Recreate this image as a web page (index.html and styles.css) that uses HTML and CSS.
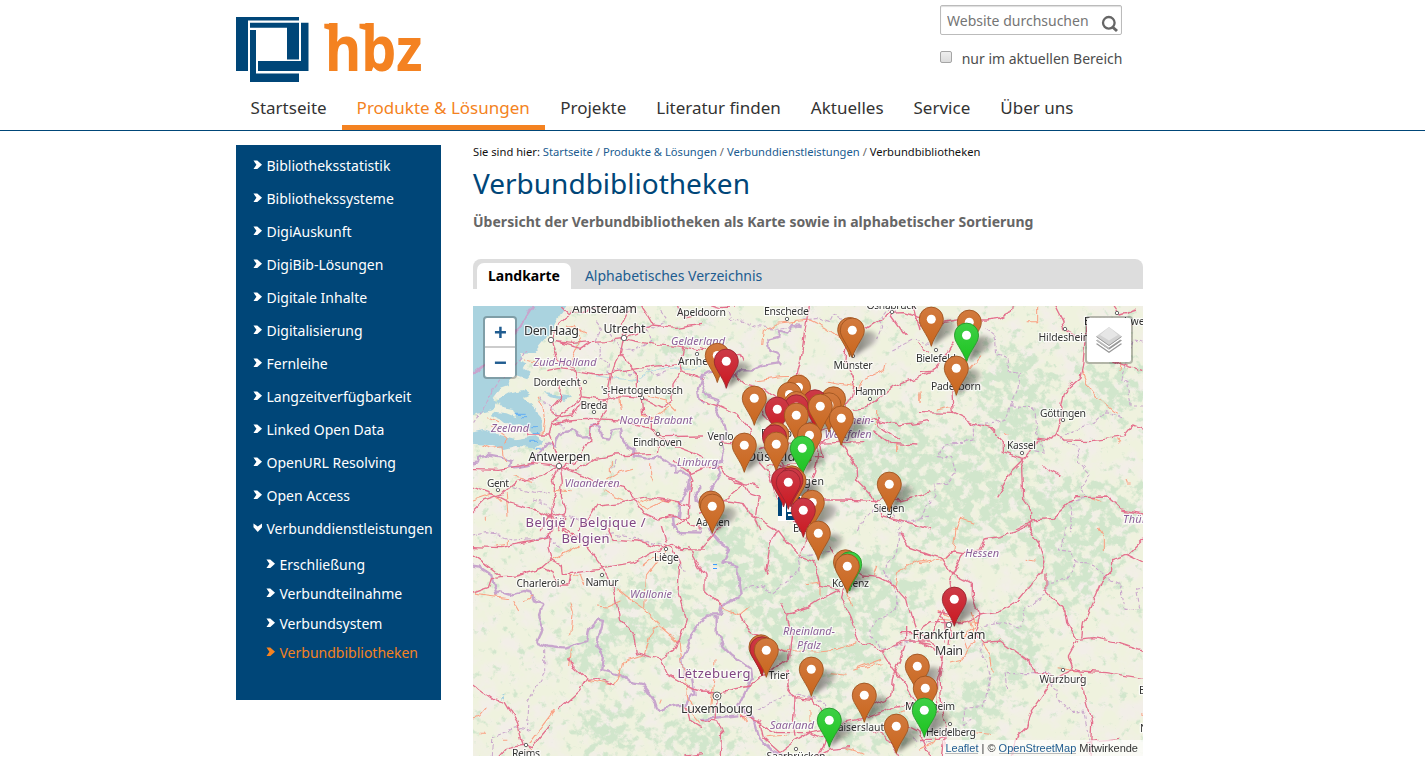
FILE: index.html
```html
<!DOCTYPE html>
<html lang="de">
<head>
<meta charset="utf-8">
<title>Verbundbibliotheken — hbz</title>
<link rel="stylesheet" href="styles.css">
</head>
<body>
<header class="header">
  <div class="wrap">
    <div class="header-top">
      <a class="logo" href="#" aria-label="hbz">
        <svg width="190" height="70" viewBox="236 15 190 70">
          <g fill="#004678"><path d="M236 17h63v3.500h-51V71h-12z"/><path d="M250 22.700h49v5h-49z"/><path d="M301 22.700h7.500V71H258v-10h43z"/><path d="M287 27h12v32.500h-12z"/><path d="M250 30h6v43.500h43V82h-49z"/></g>
          <g class="logo-text"><text transform="translate(325 71) scale(.9 1)">h</text><text transform="translate(361.200 71) scale(.9 1)">b</text><text transform="translate(396 71) scale(.87 .97)">z</text></g>
          <path fill="#f48221" d="M324.300 23.700h9v6h-4l-5-1.500zM359.500 23.700h9v6h-4l-5-1.500z"/>
        </svg>
      </a>
      <form class="search">
        <div class="search-box"><input type="text" placeholder="Website durchsuchen" aria-label="Suche">
          <svg width="18" height="18" viewBox="0 0 18 18" fill="none" stroke="#666"><circle cx="7.800" cy="7.800" r="5.800" stroke-width="2.300"/><path d="M11.500 12l4.500 4" stroke-width="3"/></svg>
        </div>
        <label class="search-scope"><input type="checkbox"><span>nur im aktuellen Bereich</span></label>
      </form>
    </div>
    <nav class="nav"><a href="#">Startseite</a><a class="active" href="#">Produkte &amp; Lösungen</a><a href="#">Projekte</a><a href="#">Literatur finden</a><a href="#">Aktuelles</a><a href="#">Service</a><a href="#">Über uns</a></nav>
  </div>
</header>
<svg class="defs" width="0" height="0"><symbol id="chev" viewBox="0 0 10 10"><path fill="currentColor" d="M.5.500H4.500L9.500 5 4.500 9.500H.5L3.600 5z"/></symbol></svg>
<div class="wrap page">
  <aside class="sidebar">
    <ul class="tree">
      <li><svg><use href="#chev"/></svg><a href="#">Bibliotheksstatistik</a></li>
      <li><svg><use href="#chev"/></svg><a href="#">Bibliothekssysteme</a></li>
      <li><svg><use href="#chev"/></svg><a href="#">DigiAuskunft</a></li>
      <li><svg><use href="#chev"/></svg><a href="#">DigiBib-Lösungen</a></li>
      <li><svg><use href="#chev"/></svg><a href="#">Digitale Inhalte</a></li>
      <li><svg><use href="#chev"/></svg><a href="#">Digitalisierung</a></li>
      <li><svg><use href="#chev"/></svg><a href="#">Fernleihe</a></li>
      <li><svg><use href="#chev"/></svg><a href="#">Langzeitverfügbarkeit</a></li>
      <li><svg><use href="#chev"/></svg><a href="#">Linked Open Data</a></li>
      <li><svg><use href="#chev"/></svg><a href="#">OpenURL Resolving</a></li>
      <li><svg><use href="#chev"/></svg><a href="#">Open Access</a></li>
      <li><svg class="open"><use href="#chev"/></svg><a href="#">Verbunddienstleistungen</a></li>
    </ul>
    <ul class="tree subtree">
      <li><svg><use href="#chev"/></svg><a href="#">Erschließung</a></li>
      <li><svg><use href="#chev"/></svg><a href="#">Verbundteilnahme</a></li>
      <li><svg><use href="#chev"/></svg><a href="#">Verbundsystem</a></li>
      <li class="current"><svg><use href="#chev"/></svg><a href="#">Verbundbibliotheken</a></li>
    </ul>
  </aside>
  <main class="content">
    <div class="crumbs">Sie sind hier: <a href="#">Startseite</a> <i>/</i> <a href="#">Produkte &amp; Lösungen</a> <i>/</i> <a href="#">Verbunddienstleistungen</a> <i>/</i> Verbundbibliotheken</div>
    <h1>Verbundbibliotheken</h1>
    <p class="lead">Übersicht der Verbundbibliotheken als Karte sowie in alphabetischer Sortierung</p>
    <div class="tabs"><a class="tab selected" href="#">Landkarte</a><a class="tab" href="#">Alphabetisches Verzeichnis</a></div>
    <div class="map">
      <svg class="map-canvas" width="670" height="450" viewBox="473 306 670 450">
        <defs>
          <filter id="woods" x="0" y="0" width="1" height="1" color-interpolation-filters="sRGB">
            <feGaussianBlur in="SourceAlpha" stdDeviation="13" result="area"/>
            <feTurbulence type="fractalNoise" baseFrequency=".11" numOctaves="5" seed="7"/>
            <feColorMatrix values="0 0 0 0 0 0 0 0 0 0 0 0 0 0 0 1 0 0 0 0" result="noise"/>
            <feComposite in="noise" in2="area" operator="arithmetic" k2="1" k3=".26"/>
            <feColorMatrix values="0 0 0 0 .82 0 0 0 0 .9 0 0 0 0 .8 0 0 0 6 -3.750"/>
          </filter>
          <filter id="fields" x="0" y="0" width="1" height="1" color-interpolation-filters="sRGB">
            <feTurbulence type="fractalNoise" baseFrequency=".05" numOctaves="5" seed="21"/>
            <feColorMatrix values="0 0 0 0 .95 0 0 0 0 .935 0 0 0 0 .91 3 0 0 0 -1.200"/>
          </filter>
          <filter id="winding" filterUnits="userSpaceOnUse" x="473" y="306" width="670" height="450" color-interpolation-filters="sRGB">
            <feTurbulence type="fractalNoise" baseFrequency=".09" numOctaves="2" seed="4" result="n"/>
            <feDisplacementMap in="SourceGraphic" in2="n" scale="7" xChannelSelector="R" yChannelSelector="G"/>
          </filter>
          <filter id="soft" x="-.3" y="-.3" width="1.600" height="1.600"><feGaussianBlur stdDeviation="2.100"/></filter>
          <linearGradient id="fade" gradientUnits="userSpaceOnUse" x1="2" y1="0" x2="25" y2="0"><stop/><stop offset="1" stop-opacity=".35"/></linearGradient>
          <linearGradient id="go" x2="0" y2="1"><stop stop-color="#d27a3f"/><stop offset="1" stop-color="#c9661d"/></linearGradient>
          <linearGradient id="gr" x2="0" y2="1"><stop stop-color="#cc3b48"/><stop offset="1" stop-color="#cb1820"/></linearGradient>
          <linearGradient id="gg" x2="0" y2="1"><stop stop-color="#3ed046"/><stop offset="1" stop-color="#1cc31f"/></linearGradient>
          <path id="body" d="M0 27C-1.500 21-5 16-8.500 9.800-10.800 6-12 3.500-12-.2A12 12 0 0 1 12-.2C12 3.500 10.800 6 8.500 9.800 5 16 1.500 21 0 27z"/>
          <g id="o"><use href="#body" fill="url(#go)" stroke="#9f541f" stroke-width=".9"/><circle r="4.500" fill="#fff"/></g>
          <g id="r"><use href="#body" fill="url(#gr)" stroke="#992631" stroke-width=".9"/><circle r="4.500" fill="#fff"/></g>
          <g id="g"><use href="#body" fill="url(#gg)" stroke="#26972b" stroke-width=".9"/><circle r="4.500" fill="#fff"/></g>
          <path id="s" fill="url(#fade)" d="M1 27L6 8C10 1 17-1 23 3q5 5-3 12-8 4-19 12z"/>
        </defs>
        <rect class="land" x="473" y="306" width="670" height="450"/>
        <rect x="473" y="306" width="670" height="450" filter="url(#fields)"/>
        <g filter="url(#woods)">
          <rect x="473" y="306" width="670" height="450" fill="none"/>
          <ellipse cx="885" cy="455" rx="58" ry="52"/><ellipse cx="1110" cy="390" rx="38" ry="30"/><ellipse cx="1015" cy="400" rx="40" ry="60"/><ellipse cx="950" cy="490" rx="55" ry="60"/><ellipse cx="1030" cy="510" rx="50" ry="40"/><ellipse cx="730" cy="555" rx="28" ry="45"/><ellipse cx="790" cy="590" rx="60" ry="45"/><ellipse cx="870" cy="590" rx="60" ry="40"/><ellipse cx="590" cy="655" rx="30" ry="30"/><ellipse cx="650" cy="615" rx="50" ry="38"/><ellipse cx="870" cy="720" rx="48" ry="30"/><ellipse cx="820" cy="645" rx="70" ry="35"/><ellipse cx="1015" cy="645" rx="30" ry="45"/><ellipse cx="1075" cy="560" rx="45" ry="45"/><ellipse cx="975" cy="710" rx="30" ry="35"/><ellipse cx="610" cy="730" rx="35" ry="30"/><ellipse cx="1100" cy="510" rx="50" ry="30"/><ellipse cx="678" cy="350" rx="22" ry="20"/><ellipse cx="700" cy="740" rx="45" ry="25"/>
        </g>
        <g filter="url(#winding)">
        <!-- coast and estuaries -->
        <g transform="translate(473 300) scale(.33333)">
          <path class="water" d="M-20 0H290L262 42 240 82 210 122 182 156 145 160 140 182 160 190 152 205 170 215 160 235 130 225 105 240 108 258 80 268 62 290 72 305 60 330 20 340-20 350z"/>
          <path class="water" d="M70 300L110 278 150 270 172 285 150 295 178 320 205 350 208 402 178 402 165 385 135 372 110 380 85 360 50 345 62 335 100 340 130 352 120 330 90 325zM-20 402L30 390 80 405 130 418 190 408 215 425 188 442 130 438 95 447 50 436-20 430zM215 280L290 285 300 293 270 299 232 292z"/>
          <path fill="none" stroke="#3c9bff" stroke-width="2" d="M125 343h30M145 353h15M175 377h20M180 401h25M166 427h35M194 442h14"/>
          <path class="lake" d="M690 195Q650 215 620 205T540 215 500 240 430 235 370 228"/>
          <path class="border" d="M-20 230L0 218 30 195 65 165 105 115 145 75 190 5" stroke-width="4"/>
          <path class="dash" d="M0 370L35 320 60 270 110 205 165 150"/>
        </g>
        <!-- north-west -->
        <g transform="translate(473 300) scale(.33333)">
          <path class="border" d="M-20 492L15 487 20 468 40 465 80 472 112 480 108 500 128 502 162 496 182 490 192 465 222 432 248 440 250 420 260 400 300 390 326 410 350 408 355 378 380 380 384 412 408 416 418 392 442 386 444 412 462 440 485 448 482 470 545 478 556 468 588 490 608 500 606 515 632 515 652 530 648 565 622 600 618 650 600 655 605 690M690 225L675 265 680 300 690 310M690 560L665 575 668 600 690 615"/>
          <path class="dash" d="M370 65L385 85 370 120 385 150 378 180 410 190 405 215 450 210 470 225 520 212 550 225 580 215M520 80L555 85 580 55 560 30M200 290L215 310 240 318 250 360 275 385M410 100L440 145 490 150 530 125 520 90M180 600L220 610 235 635 275 650 330 665M120 560L180 580 230 575M430 480L415 515"/>
          <path class="minor" d="M300 75L325 115 310 150 290 190M195 290L210 320 215 360 210 405M150 180L190 185 205 205M285 75L340 100M25 435L55 445 90 440 95 485M60 380L100 410 92 430M440 285L445 330M400 540L440 515 480 505M530 490L530 530 540 555M530 595L500 610 520 625 570 600 610 610M100 580L105 650M125 530L185 545M240 570L290 575M590 320L530 360 510 345M610 330L580 300 520 285M415 483V520M0 600L60 580 85 605M40 350L75 365M40 650V665M400 575L450 600"/>
          <path class="road" d="M235 118L248 85 275 60 300 40 345 30 390 18M248 125L300 130 348 125 400 122 450 115 520 130 610 140 690 155M350 128L325 145 248 125M452 112L448 70 465 35 495 10M452 112L442 160 460 185 490 215 490 255 508 295 512 340 535 355 535 390 552 410 610 440 690 470M442 160L430 180 415 225 402 290 400 335 370 375 352 385 350 420 330 455 310 485 262 500M235 118L250 175 300 205 320 255 325 290 300 320 265 340 235 370 225 405 240 440 262 500M220 212L255 205 310 212 380 225 420 220 530 200 590 195 615 190M265 255L262 295 236 325 238 345 265 350M265 350L300 345 325 305M325 290L385 300 430 290 508 295M155 375L165 405 225 405M235 375L290 360 340 355 440 360 465 372 540 385 570 410 690 408M508 295L565 325 600 300 600 255 625 215 690 235M495 75L465 95 452 112M452 112L490 100 540 75 520 40 500 10M540 75L610 82 655 75 690 70M-20 505L80 508 180 490 262 500 370 545 455 560 480 590 515 640 560 660 590 650 620 655 690 690M-20 555L80 590 110 605 160 620 190 630 230 650 260 660M-20 655L35 600 90 580 130 545 200 530 262 500M262 500L238 540 248 580 238 620 235 655 262 690M262 500L268 540 265 590 278 625 272 690M262 500L310 510 370 475 425 465 550 460 555 430 575 440M315 690L350 650 372 615 445 608 520 590 580 600 645 615M645 510L660 540 650 580 645 650 610 675M600 480L655 520 690 505"/>
          <path class="road" d="M610 10L630 55 690 40M630 140L620 185 625 215M200 690L230 650 280 640M262 18L290 45"/>
        </g>
        <!-- north -->
        <g transform="translate(700 300) scale(.33333)">
          <path class="border" d="M305 75L278 72 262 98 240 90 238 112 202 122 208 150 240 162 235 190 185 198 155 212 125 210 100 230 65 215 25 220 0 235 12 265 25 290 55 300 45 325 70 370 78 400 65 425 72 455 65 485 45 490 65 520 38 560 22 585 0 590"/>
          <path class="dash" d="M85 35L92 58 142 70 170 80 240 85 300 75M305 60L360 55 390 65 400 45 430 60M530 120L545 80 535 60 560 30 600 40M580 150L640 120 690 130M475 690L495 650 550 620 600 670 690 650"/>
          <path class="minor" d="M185 135L190 95 230 70 330 60 380 85 430 120M165 240L240 230 310 228 325 245M380 250L480 265 490 240 550 212 555 190M660 280V305M530 330V375M590 430V450"/>
          <path class="road" d="M330 10L312 105 305 165 290 235 288 300 320 380M0 0L60 20 105 18M0 145L75 165 120 160 130 182M100 225L130 250 190 265 260 320M440 90L435 185 465 245 455 290 425 330 420 425 468 495 470 540 520 590 545 650 640 672 690 690M690 215L580 260 500 325 400 340 300 380M385 380L520 360 600 375 690 362M350 430L490 425M520 395L570 430 655 435M530 350L540 380 600 420M500 85L570 40 610 38 690 60M575 45L620 110M300 600L430 600 530 605 545 590 600 600 690 575M0 300L55 320 110 345 150 390 155 460 200 510 230 590M0 505L65 500 85 530 130 550 180 560M65 425L110 430 180 480M85 535L100 545 130 552 145 580 175 590 165 660 180 690M0 640L50 620 130 552M60 600L130 610 150 640 230 690M300 470L370 470 360 430 390 410M355 440L350 490 335 540 310 600M240 480L270 530 300 580"/>
          <path class="road" d="M150 300L200 350 240 390 330 400 395 380M180 450L240 430 340 440M200 500L300 490 350 440M230 590L260 640 310 690M650 130L690 160M660 90L640 10"/>
        </g>
        <!-- north-east -->
        <g transform="translate(920 300) scale(.33333)">
          <path class="dash" d="M200 85L225 105 230 160 265 175 265 215 298 220 290 270 270 320 260 355 225 370 160 375 160 420 80 435 55 470 95 475 108 520 80 550 45 552 45 590 0 655M270 318L340 320 350 400 375 460 340 450M690 315L630 315 620 250 605 240 620 190 640 120 690 130M600 350L560 335 520 375 480 380 420 415 470 440 480 490 510 520 480 560 500 590 450 610 455 690"/>
          <path class="minor" d="M485 210L500 250 530 290 590 340M350 18L350 65 320 65M180 170L130 230 90 255M640 75L605 95M620 85L600 210M50 330L95 320M255 400L268 408M105 690L120 655 160 670M615 540L620 552H632M510 590L550 608M590 420L600 430M0 285V305"/>
          <path class="road" d="M400 5L428 60 435 90 470 110 500 115M500 60L490 180 480 235 430 280 422 320 428 340 410 400 395 420 355 415 330 455 315 475 290 470 250 455 250 425 210 385 160 370 100 340 0 338M100 340L95 265 110 205M410 400L435 420 520 422 610 410 640 375 690 395M315 475L270 520 255 550 230 592M315 475L305 500 308 600 335 640 335 665 285 690M335 660L400 655 470 590 560 588 605 630 690 645M370 500L425 528M0 215L40 210 80 160 100 125M0 78L110 60 200 60 240 55 270 40 275 8M575 8L600 45 650 30M500 100L545 165 600 190 690 220M325 665V690"/>
        </g>
        <!-- south-west -->
        <g transform="translate(473 526) scale(.33333)">
          <path class="border" d="M-20 116L20 122 55 145 70 210 82 195 115 205 150 195 175 200 182 225 208 235 195 270 208 310 190 350 225 362 275 368 340 345 345 310 372 280 390 285 370 358 390 385 385 432 440 445 470 470 510 478 545 525 555 555 600 540 640 535 652 510 668 505 660 460 635 455 628 400 645 360 660 320 690 280M605 0L615 18 690 20"/>
          <path class="dash" d="M0 30L40 20 80 25 120 45 185 40 220 30 260 65M215 370L215 440 190 485 165 530 160 610M55 690L60 635 130 605 170 620M290 30L360 40 420 20 500 40 570 60M600 90L640 140M660 15L690 10"/>
          <path class="minor" d="M230 105L320 60M100 40V55L65 60M290 230L298 258 290 325M0 205L110 218M125 228L140 255M150 225L180 210M375 240L405 243 445 225M430 185L460 210 510 245 560 300 618 350 640 480 645 520M515 245L520 150 550 110 580 70M555 300L530 330 515 385 450 405 440 450 420 478 342 462M295 370L290 420M170 650L245 550M0 578L20 570 40 545M320 140L335 180M285 150L325 145M20 625H35M90 643H103M150 680L175 670M560 530L565 518M640 540L680 590M645 520L680 560M510 120L540 95 570 90"/>
          <path class="road" d="M-20 61L80 65 180 45 230 30 240 0M-20 75L50 125 85 152 130 150 200 130 235 100 225 60 235 0M235 100L265 115 268 145 290 145 285 180 250 180 240 140 205 125M290 140L390 125 480 110 560 70 600 55 620 70 690 72M345 65L380 110 390 125 420 185 440 280 480 320 490 380 560 400 600 375 620 340 640 280 615 200 620 110 600 65 570 55M400 0L420 40 500 45 560 65M560 400L580 445 640 480 690 498M-20 462L60 520 100 530 130 580 150 655 175 665 230 600M85 152L55 155 45 185-20 207M290 395L300 420 342 460 320 495 260 550M342 460L370 458 425 480M70 700L100 665 150 655M565 0L580 50M270 0L345 65M270 10L300 40M650 60L660 90 690 145M640 540L650 580 690 605M640 690L690 683"/>
          <path fill="none" stroke="#69b7e0" stroke-width="2" d="M87 520l10-8v8m-5-14h8"/>
        </g>
        <!-- south -->
        <g transform="translate(700 526) scale(.33333)">
          <path class="border" d="M25 0L35 20 55 45 88 70 70 110 115 120 115 150 125 205 95 225 65 240 60 265 25 265 0 280M50 270L50 320 70 360 95 385 150 425 155 460 115 540 150 570 165 590 180 640 210 670 270 700M0 580L60 570 115 565"/>
          <path class="dash" d="M130 190L180 180 220 200 265 160 300 130 290 100 340 85 400 70M170 550L250 510 290 505 350 520 420 570M600 0L590 80 550 130 590 200 590 250 520 290 510 330 550 370 690 330M690 650L640 640"/>
          <path class="minor" d="M65 245L120 265 150 240M250 370L350 375 410 370 470 350M320 170L360 165 360 210M580 185L590 140 640 110 690 100M460 430L540 400M140 590L120 560M45 400L42 460 30 560M200 635L260 630M330 550L330 610M520 150L530 120M390 440L440 445M470 430L545 410M440 200L455 235M440 670L490 685M600 560L690 500"/>
          <path class="road" d="M0 125L15 150 15 190 65 240M65 0L0 70M235 10L275 65 300 95 340 110 355 155 360 178 420 190M235 10L210 60 198 130 205 145M325 0L300 90M390 60L410 95 490 150 540 155 580 175 620 220 635 280 660 350 690 355M430 185L425 215 455 280 475 345 545 375 580 430 620 480 660 560M420 190L350 225 320 245 260 265 242 232M260 265L275 330 265 400 215 430 150 480 50 500 0 498M120 265L150 320 210 350 270 380M265 430L260 480 285 515 335 520 370 560 400 610M285 515L280 590 285 635M545 375L615 345 690 345M615 355L580 460 575 510 500 545M400 620L430 590 500 575 590 540 640 530M690 690L660 620 620 600M490 600L560 630 605 705M0 580L50 585 65 620 60 705M50 500L45 580M120 565L180 590 190 635 240 680 280 650 330 620 380 640 345 705M180 590L230 620 320 620 400 605M330 700L390 670 450 665M600 20L620 60 690 85M600 320L660 320 690 345M620 300V340"/>
        </g>
        <!-- south-east -->
        <g transform="translate(920 526) scale(.33333)">
          <path class="dash" d="M435 0L430 45 415 75 460 80 465 110 440 160 380 170 380 205 315 245 310 280 300 305 250 290 185 300 180 370 200 410 210 470 190 545 130 550 130 595 160 580M260 490L255 440 390 440 410 510 450 560 490 555 500 600 510 670M460 110L520 115 560 155 600 175 615 250 660 250 650 190 690 180"/>
          <path class="minor" d="M110 0L98 75 75 100 0 110M320 97L347 103M535 0L550 30 550 78M185 350L210 385 220 440M90 405L130 395 165 345 150 290M150 255L165 300 130 330 140 370M410 425L470 435M160 620L210 625M50 250L90 270M0 670L40 650 60 610M660 560L690 570M60 280L180 290"/>
          <path class="road" d="M0 78L60 95 90 140 160 175 160 210 180 270 230 262 290 225 365 137 375 110 355 50 320 2 240 35 195 42 180 72 130 80 100 140 90 170 100 220M375 137L375 190 435 255 440 290 470 340 520 335 600 350 690 380M470 345L445 390 460 430 480 435 560 440 690 460M480 440L495 520 515 590 510 705M460 430L400 460 330 560 320 600 290 630 270 705M485 335L490 290 535 190 545 165 575 135 575 100 620 85 690 120M625 85L670 40 690 35M180 270L130 290 30 290 0 310M180 270L165 320 190 350 240 345 330 410 340 440 400 445M0 350L40 370 70 390 60 450 65 540 80 600 65 705M70 250L50 300 30 340 70 400 50 470 50 560M100 280L90 360M50 255L110 265M0 640L60 640 90 620M500 650L600 640M75 100L100 75 130 80M60 250L75 290 75 350"/>
        </g>
        </g>
        <!-- place dots -->
        <g class="dots"><circle cx="551" cy="340" r="2.700"/><circle cx="624" cy="338" r="2.700"/><circle cx="585" cy="382" r="1.700"/><circle cx="642" cy="398" r="1.700"/><circle cx="594" cy="412" r="1.700"/><circle cx="658" cy="434" r="1.700"/><circle cx="559" cy="466" r="2.700"/><circle cx="498" cy="490" r="1.700"/><circle cx="697" cy="354" r="1.700"/><circle cx="787" cy="319" r="1.700"/><circle cx="892" cy="312" r="1.700"/><circle cx="721" cy="444" r="1.700"/><circle cx="870" cy="399" r="1.700"/><circle cx="853" cy="356" r="1.700"/><circle cx="936" cy="350" r="1.700"/><circle cx="1065" cy="329" r="1.700"/><circle cx="1117" cy="313" r="1.700"/><circle cx="1063" cy="420" r="1.700"/><circle cx="1022" cy="453" r="1.700"/><circle cx="889" cy="516" r="1.700"/><circle cx="666" cy="549" r="1.700"/><circle cx="602" cy="575" r="1.700"/><circle cx="563" cy="582" r="1.700"/><circle cx="526" cy="745" r="1.700"/><circle cx="717" cy="696" r="4"/><circle cx="717" cy="696" r="1.500"/><circle cx="796" cy="749" r="1.700"/><circle cx="949" cy="625" r="2.700"/><circle cx="1063" cy="670" r="1.700"/><circle cx="950" cy="724" r="1.700"/></g>
        <path d="M713 564.500h4M713 568.500h4" stroke="#3c9bff"/>
        <g class="labels">
          <g class="town">
            <text x="701.500" y="316" textLength="49">Apeldoorn</text><text x="786.500" y="315" textLength="45">Enschede</text><text x="891.500" y="308.500" textLength="50">Osnabrück</text><text x="698" y="365" textLength="40">Arnhem</text><text x="557" y="386" textLength="47">Dordrecht</text><text x="642" y="394" textLength="82">'s-Hertogenbosch</text><text x="594" y="409" textLength="27">Breda</text><text x="657.500" y="446" textLength="49">Eindhoven</text><text x="498" y="486.500" textLength="22">Gent</text><text x="720.500" y="440" textLength="26">Venlo</text><text x="853" y="369" textLength="39">Münster</text><text x="870.500" y="395" textLength="31">Hamm</text><text x="936" y="362" textLength="40">Bielefeld</text><text x="956" y="389.500" textLength="50">Paderborn</text><text x="1065.500" y="341" textLength="54">Hildesheim</text><text x="1119" y="324.500" textLength="70">Braunschweig</text><text x="1063" y="417" textLength="46">Göttingen</text><text x="1021.500" y="449" textLength="29">Kassel</text><text x="713" y="526" textLength="34">Aachen</text><text x="786" y="437" textLength="50">Duisburg</text><text x="801" y="485" textLength="46">Solingen</text><text x="889" y="512" textLength="31">Siegen</text><text x="804" y="532" textLength="22">Bonn</text><text x="850.500" y="587" textLength="37">Koblenz</text><text x="666.500" y="561" textLength="25">Liège</text><text x="538" y="586.500" textLength="43">Charleroi</text><text x="602" y="586" textLength="33">Namur</text><text x="526" y="757" textLength="28">Reims</text><text x="779" y="678.500" textLength="21">Trier</text><text x="796" y="760" textLength="59">Saarbrücken</text><text x="866" y="731" textLength="69">Kaiserslautern</text><text x="930" y="709.500" textLength="50">Mannheim</text><text x="951" y="736" textLength="50">Heidelberg</text><text x="1063" y="682.500" textLength="47">Würzburg</text><text x="1159" y="694" textLength="40">Bamberg</text><text x="1164" y="732" textLength="48">Nürnberg</text>
          </g>
          <g class="city">
            <text x="604.500" y="313" textLength="65">Amsterdam</text><text x="551.500" y="335" textLength="55">Den Haag</text><text x="624.500" y="333" textLength="42">Utrecht</text><text x="559.500" y="461" textLength="62">Antwerpen</text><text x="780" y="461" textLength="66">Düsseldorf</text><text x="717" y="712.500" textLength="72">Luxembourg</text><text x="949" y="639" textLength="73">Frankfurt am</text><text x="949" y="654.500" textLength="28">Main</text>
          </g>
          <g class="region">
            <text x="565" y="366" textLength="63">Zuid-Holland</text><text x="698" y="345" textLength="54">Gelderland</text><text x="656" y="424" textLength="73">Noord-Brabant</text><text x="510" y="432" textLength="38">Zeeland</text><text x="697.500" y="466" textLength="41">Limburg</text><text x="592" y="486.500" textLength="55">Vlaanderen</text><text x="651" y="598" textLength="42">Wallonie</text><text x="848" y="424" textLength="52">Nordrhein-</text><text x="848" y="438" textLength="47">Westfalen</text><text x="982" y="557" textLength="34">Hessen</text><text x="809" y="635" textLength="52">Rheinland-</text><text x="809" y="649" textLength="24">Pfalz</text><text x="792" y="729" textLength="44">Saarland</text><text x="1149" y="523" textLength="52">Thüringen</text>
          </g>
          <g class="country">
            <text x="585.500" y="527" textLength="120">België / Belgique /</text><text x="585.500" y="543" textLength="48">Belgien</text><text x="714" y="678" textLength="73">Lëtzebuerg</text>
          </g>
        </g>
        <!-- marker shadows -->
        <g opacity=".5" filter="url(#soft)">
          <use href="#s" x="931" y="319"/><use href="#s" x="967" y="335"/><use href="#s" x="852" y="330"/><use href="#s" x="726" y="361"/><use href="#s" x="754" y="398"/><use href="#s" x="841" y="418"/><use href="#s" x="820" y="406"/><use href="#s" x="796" y="415"/><use href="#s" x="744" y="445"/><use href="#s" x="776" y="444"/><use href="#s" x="802" y="448"/><use href="#s" x="790" y="482"/><use href="#s" x="796" y="482"/><use href="#s" x="812" y="503"/><use href="#s" x="889" y="484"/><use href="#s" x="712" y="506"/><use href="#s" x="818" y="533"/><use href="#s" x="847" y="566"/><use href="#s" x="766" y="650"/><use href="#s" x="811" y="669"/><use href="#s" x="864" y="695"/><use href="#s" x="829" y="720"/><use href="#s" x="896" y="726"/><use href="#s" x="917" y="666"/><use href="#s" x="956" y="368"/><use href="#s" x="925" y="710"/><use href="#s" x="954" y="599"/>
        </g>
        <g transform="translate(778 496)"><path fill="#fff" d="M0 0h24v25H0z"/><path fill="#004678" d="M0 1h4v19H0zM5 1h17v2H5zM5 4h3v20h16v-4H10v-2h10v-2H9V6h13V4z"/></g>
        <!-- markers -->
        <use href="#o" x="931.300" y="319.300"/><use href="#o" x="969.300" y="322.300"/><use href="#o" x="849.700" y="329.700"/><use href="#o" x="852.300" y="330.300"/><use href="#g" x="966.500" y="335.300"/><use href="#o" x="717.300" y="355.500"/><use href="#r" x="726.300" y="361.300"/><use href="#o" x="956.300" y="368.300"/>
        <use href="#o" x="798.500" y="387.300"/><use href="#o" x="789.500" y="394.500"/><use href="#o" x="754.300" y="398.300"/><use href="#o" x="833.500" y="399"/><use href="#r" x="815" y="402"/><use href="#o" x="796.300" y="403.700"/><use href="#o" x="829" y="405"/><use href="#r" x="796.300" y="407"/><use href="#o" x="820.300" y="406.300"/><use href="#r" x="777.300" y="409.300"/><use href="#o" x="796.300" y="415.300"/><use href="#o" x="841.300" y="418.300"/>
        <use href="#o" x="777" y="434.700"/><use href="#o" x="809.500" y="435.300"/><use href="#r" x="774.500" y="437"/><use href="#o" x="776.300" y="444.300"/><use href="#o" x="744.300" y="445.300"/><use href="#g" x="802.300" y="448.300"/>
        <use href="#o" x="791.700" y="478"/><use href="#o" x="794" y="480.500"/><use href="#r" x="783.500" y="480"/><use href="#r" x="791" y="480"/><use href="#r" x="788.300" y="482.300"/><use href="#o" x="889.300" y="484.300"/><use href="#o" x="812.300" y="502.500"/><use href="#o" x="711" y="503.300"/><use href="#o" x="712.300" y="506.300"/><use href="#r" x="803.300" y="510.300"/><use href="#o" x="818.300" y="533.300"/>
        <use href="#o" x="845.500" y="562"/><use href="#g" x="849.700" y="564"/><use href="#o" x="847.300" y="566.300"/><use href="#r" x="954.300" y="599.300"/><use href="#o" x="761" y="647"/><use href="#r" x="762" y="649"/><use href="#o" x="766.300" y="650.300"/><use href="#o" x="917.300" y="666.300"/><use href="#o" x="811.300" y="669.300"/><use href="#o" x="925.300" y="688.300"/><use href="#o" x="864.300" y="695.300"/><use href="#g" x="924.300" y="710.300"/><use href="#g" x="829.300" y="720.300"/><use href="#o" x="896.300" y="726.300"/>
      </svg>
      <div class="zoom"><a href="#">+</a><a href="#">−</a></div>
      <a class="layers" href="#" aria-label="Ebenen"><svg width="26" height="26" viewBox="0 0 26 26"><path fill="#969696" d="M0 17l4-3 9 6 9-6 4 3-13 9z"/><path fill="#fff" d="M0 13.500l13 9 13-9v2l-13 9-13-9z"/><path fill="#999" d="M0 13.500L4 11l9 6 9-6 4 2.500-13 9z"/><path fill="#bbb" d="M0 13.500L4 11l9 6v5.500z"/><path fill="#fff" d="M0 9.500l13 9 13-9v2l-13 9-13-9z"/><path fill="#d2d2d2" d="M13 0l13 9.500-13 9-13-9z"/><path fill="#e6e6e6" d="M13 0l9 8-9 5.500L4 8z"/><path fill="none" stroke="#999" d="M.5 9.700l12.500 8.800 12.500-8.800"/></svg></a>
      <div class="attribution"><a href="#">Leaflet</a> | © <a href="#">OpenStreetMap</a> Mitwirkende</div>
    </div>
  </main>
</div>
</body>
</html>
```

FILE: styles.css
```css
* { box-sizing: border-box; }
body { margin: 0; background: #fff; color: #333; font: 14px/20px "Noto Sans", "Open Sans", sans-serif; overflow: hidden; }
a { color: #205c90; text-decoration: none; }
.wrap { width: 953px; margin: 0 auto; }
.header { height: 131px; border-bottom: 1px solid #004678; }
.header-top { display: flex; justify-content: space-between; height: 86px; padding-right: 67px; }
.logo { padding-top: 15px; }
.logo svg { display: block; overflow: visible; }
.logo-text { font: bold 62px "Noto Sans", sans-serif; fill: #f48221; }
.search { width: 182px; padding-top: 5px; }
.search-box { display: flex; align-items: center; height: 30px; border: 1px solid #bbb; border-radius: 2px; box-shadow: inset 0 1px 1px #ddd; }
.search-box input { width: 160px; height: 26px; padding: 0 0 0 6px; border: 0; background: none; font: inherit; outline: 0; }
.search-box input::placeholder { color: #757575; }
.search-box svg { flex: none; margin-top: 8px; }
.search-scope { display: flex; justify-content: space-between; width: 182.500px; margin-top: 14px; color: #4d4d4d; white-space: nowrap; }
.search-scope input { appearance: none; width: 12px; height: 12px; margin: 2px 0 0; border: 1px solid #a5a5a5; border-radius: 2px; background: linear-gradient(#eee, #dcdcdc); }
.nav { display: flex; height: 44px; font-size: 17px; line-height: 44px; }
.nav a { padding: 0 15px; color: #333; white-space: nowrap; }
.nav a:nth-child(-n+2) { padding: 0 15.400px 0 14.600px; }
.nav .active { color: #f48221; border-bottom: 5px solid #f48221; }
.defs { position: absolute; }
.page { display: flex; align-items: flex-start; gap: 32px; padding-top: 14px; }
.sidebar { width: 205px; height: 555px; padding-top: 4px; background: #004678; color: #fff; }
.tree { margin: 0; padding: 0 0 0 17px; list-style: none; }
.tree li { display: flex; height: 33px; line-height: 33px; white-space: nowrap; }
.tree a { color: inherit; }
.tree svg { width: 9.500px; height: 9.500px; margin: 10.500px 4px 0 0; }
.tree .open { transform: rotate(90deg); }
.subtree { padding: 5px 0 0 30px; }
.subtree li { height: 29.300px; line-height: 29.300px; }
.subtree svg { margin-top: 9px; }
.subtree .current { color: #f48221; }
.content { width: 670px; }
.crumbs { height: 14px; font-size: 11.200px; line-height: 14px; color: #111; white-space: nowrap; }
.crumbs i { font-style: normal; color: #666; }
h1 { margin: 4px 0 0; color: #004678; font-size: 28px; font-weight: 400; line-height: 40px; }
.lead { margin: 9px 0 0; color: #666; font-weight: 700; letter-spacing: .025px; line-height: 20px; white-space: nowrap; }
.tabs { display: flex; gap: 3px; height: 30px; margin-top: 27px; padding: 4px 4px 0; border-radius: 8px 8px 0 0; background: #ddd; }
.tab { padding: 0 11px; border-radius: 7px 7px 0 0; line-height: 26px; }
.tab.selected { background: #fff; color: #000; font-weight: 700; }
.map { position: relative; width: 670px; height: 450px; margin-top: 17px; overflow: hidden; }
.map-canvas { display: block; }
.land { fill: #eff2de; }
.water { fill: #aad3df; }
.lake { fill: none; stroke: #b9dbe3; stroke-width: 3; }
.road, .minor, .border, .dash { fill: none; stroke-linejoin: round; }
.road { stroke: #e4708d; stroke-width: 4; }
.minor { stroke: #faa183; stroke-width: 3.200; }
.border { stroke: #c8a5cd; stroke-width: 7; }
.dash { stroke: #cba9cd; stroke-width: 3.300; stroke-dasharray: 12 6; }
.dots { fill: #fff; stroke: #666; }
.labels { text-anchor: middle; font-family: "Noto Sans", sans-serif; fill: #333; stroke: rgba(255, 255, 255, .75); stroke-width: 2.500px; paint-order: stroke; stroke-linejoin: round; }
.town { font-size: 10.500px; }
.city { font-size: 12.500px; }
.region { font-size: 11px; font-style: italic; fill: #8b5f98; }
.country { font-size: 13px; fill: #804683; }
.zoom, .layers { position: absolute; top: 10px; border: 2px solid rgba(0, 0, 0, .25); border-radius: 4px; background: #fff; background-clip: padding-box; }
.zoom { left: 10px; width: 34px; height: 63px; }
.zoom a { display: block; height: 30px; padding-left: 1px; font: bold 22px/30px "Liberation Sans", sans-serif; text-align: center; }
.zoom a:first-child { border-bottom: 2px solid #ccc; }
.layers { right: 10px; width: 48px; height: 48px; display: grid; place-items: center; }
.attribution { position: absolute; right: 0; bottom: 0; height: 16px; padding: 0 5px 0 2px; background: rgba(255, 255, 255, .7); font: 11px/16px "Liberation Sans", sans-serif; white-space: nowrap; }
.attribution a { display: inline-block; height: 14px; border-bottom: 1px solid #bbb; line-height: 16px; }
```
